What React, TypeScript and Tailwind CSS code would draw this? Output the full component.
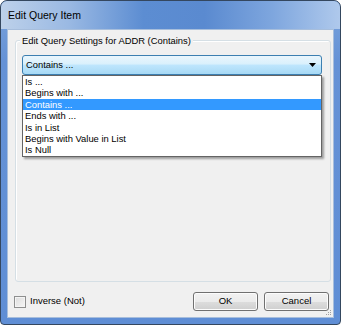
const F = { fontFamily: '"Liberation Sans", Arial, sans-serif' };

export default function App() {
  const items = [
    "Is ...",
    "Begins with ...",
    "Contains ...",
    "Ends with ...",
    "Is in List",
    "Begins with Value in List",
    "Is Null",
  ];
  return (
    <div className="w-[341px] h-[325px] bg-white" style={F}>
      <div className="w-[341px] h-[325px] rounded-t-[7px] rounded-b-[4px] border border-[#34475f] bg-[linear-gradient(180deg,#7aa3db_0px,#6592d6_60px,#5f8ed5_100%)] px-[6px] pb-[6px] flex flex-col overflow-hidden">
        <div className="-mx-[6px] h-[28px] shrink-0 flex items-center pl-[7px] pt-[1px] text-[10.5px] text-black bg-[linear-gradient(90deg,#bdd1ea_0%,#9ab9e3_20%,#5c8dd2_42%,#5a8ad0_60%,#7ea6de_80%,#afc9ec_100%)] rounded-t-[6px]">
          Edit Query Item
        </div>
        <div className="flex-1 border border-[#a7bedc] bg-[#f0f0f0] flex flex-col">
          <div className="relative ml-[7px] mr-[2px] mt-[10px] h-[242px] rounded-[3px] border border-[#d5dfe5] shadow-[inset_1px_1px_0_#ffffff]">
            <div className="absolute -top-[7px] left-[4px] px-[2px] bg-[#f0f0f0] leading-[13px] text-[9.4px] text-black">
              Edit Query Settings for ADDR (Contains)
            </div>
            <div className="relative ml-[6px] mt-[14px] w-[300px] h-[20px]">
              <div className="w-full h-full rounded-[3px] border border-[#3c7fb1] bg-[linear-gradient(180deg,#eaf6fd_0%,#d9f0fc_45%,#bee6fd_50%,#a7d9f5_100%)] flex items-center pl-[3px] pr-[5px] text-[9.4px] text-black">
                <span className="flex-1">Contains ...</span>
                <svg width="7" height="4" viewBox="0 0 7 4">
                  <path d="M0 0H7L3.5 4Z" fill="#000" />
                </svg>
              </div>
              <div className="absolute top-full left-0 w-[300px] border border-[#646464] bg-white shadow-[2px_2px_2px_rgba(0,0,0,0.35)] z-10">
                {items.map((t) => (
                  <div
                    key={t}
                    className={
                      "h-[11.4px] leading-[11.4px] pl-[2px] text-[9.4px] " +
                      (t === "Contains ..." ? "bg-[#3399ff] text-white" : "text-black")
                    }
                  >
                    {t}
                  </div>
                ))}
              </div>
            </div>
          </div>
          <div className="relative flex items-center mt-[10px] h-[19px] pl-[6px] pr-[4px]">
            <div className="w-[12px] h-[12px] border border-[#8e8f8f] bg-[linear-gradient(135deg,#dcdcdc,#f6f6f6)] shadow-[inset_0_0_0_1px_#f4f4f4]" />
            <span className="ml-[4px] text-[9.5px] text-black">Inverse (Not)</span>
            <div className="flex-1" />
            <div className="w-[65px] h-[19px] rounded-[3px] border border-[#707070] bg-[linear-gradient(180deg,#f2f2f2_0%,#ebebeb_50%,#dddddd_51%,#cfcfcf_100%)] shadow-[inset_0_0_0_1px_#fcfcfc] flex items-center justify-center text-[9.5px] text-black">
              OK
            </div>
            <div className="ml-[6px] w-[65px] h-[19px] rounded-[3px] border border-[#707070] bg-[linear-gradient(180deg,#f2f2f2_0%,#ebebeb_50%,#dddddd_51%,#cfcfcf_100%)] shadow-[inset_0_0_0_1px_#fcfcfc] flex items-center justify-center text-[9.5px] text-black">
              Cancel
            </div>
            <svg className="absolute right-[1px] -bottom-[5px]" width="7" height="7" viewBox="0 0 7 7">
              <rect x="5" y="1" width="1" height="1" fill="#a0a0a0" />
              <rect x="3" y="3" width="1" height="1" fill="#a0a0a0" />
              <rect x="5" y="3" width="1" height="1" fill="#a0a0a0" />
              <rect x="1" y="5" width="1" height="1" fill="#a0a0a0" />
              <rect x="3" y="5" width="1" height="1" fill="#a0a0a0" />
              <rect x="5" y="5" width="1" height="1" fill="#a0a0a0" />
            </svg>
          </div>
        </div>
      </div>
    </div>
  );
}
